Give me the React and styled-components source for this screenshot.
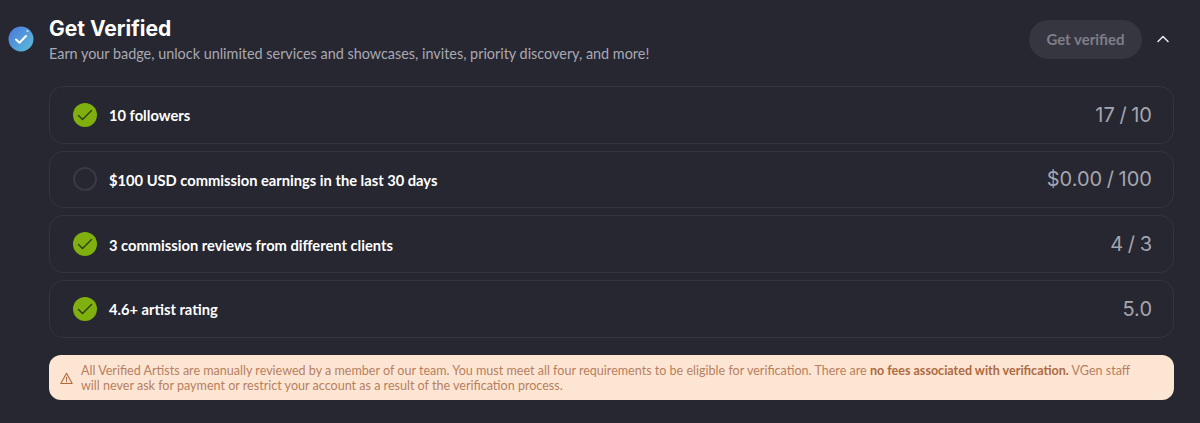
import React from 'react'
import styled, { createGlobalStyle } from 'styled-components'

const GlobalStyle = createGlobalStyle`
  html, body {
    margin: 0;
    background: #272731;
  }
  * {
    box-sizing: border-box;
  }
`

const Page = styled.div`
  width: 1200px;
  height: 423px;
  overflow: hidden;
  background: #272731;
  font-family: Lato, "Liberation Sans", sans-serif;
  padding: 13px 26px 0 8px;
  display: flex;
  flex-direction: column;
`

const Header = styled.header`
  display: flex;
  align-items: center;
  height: 52px;
`

const Badge = styled.svg`
  flex: 0 0 26px;
  width: 26px;
  height: 26px;
  margin-right: 15px;
`

const HeaderText = styled.div`
  flex: 1 1 auto;
`

const Title = styled.h2`
  margin: 0;
  font-family: Inter, "Liberation Sans", sans-serif;
  font-size: 21px;
  line-height: 27px;
  font-weight: 700;
  color: #fff;
`

const Subtitle = styled.p`
  margin: 2px 0 0;
  font-size: 14.4px;
  line-height: 20px;
  color: #a9a9b3;
`

const VerifyButton = styled.button`
  border: 0;
  width: 113px;
  height: 39px;
  border-radius: 20px;
  background: #363640;
  color: #7e7e88;
  font: 700 15px Lato, "Liberation Sans", sans-serif;
`

const Chevron = styled.svg`
  width: 14px;
  height: 14px;
  margin: 0 4px 0 14px;
`

const Requirements = styled.ul`
  list-style: none;
  margin: 21px 0 0 41px;
  padding: 0;
  display: flex;
  flex-direction: column;
  gap: 7px;
`

const Requirement = styled.li`
  height: 57.67px;
  border: 1px solid #34343e;
  border-radius: 14px;
  padding: 0 21px 0 23px;
  display: flex;
  align-items: center;
`

const StatusMark = styled.span`
  flex: 0 0 24px;
  width: 24px;
  height: 24px;
  border-radius: 50%;
  margin-right: 12px;
  display: flex;
  align-items: center;
  justify-content: center;
  background: ${p => (p.$done ? '#7fb00d' : 'transparent')};
  border: ${p => (p.$done ? '0' : '2px solid #3a3a44')};
`

const Label = styled.span`
  flex: 1 1 auto;
  padding-top: 1px;
  font-size: 14.7px;
  font-weight: 700;
  color: #fff;
`

const Progress = styled.span`
  font-family: Inter, "Liberation Sans", sans-serif;
  font-size: 20px;
  word-spacing: -1px;
  color: #a5a5ae;
`

const Notice = styled.div`
  margin: 17px 0 0 41px;
  height: 45px;
  border-radius: 12px;
  background: #fde5d3;
  padding: 2px 40px 0 11px;
  display: flex;
  align-items: center;
  gap: 8px;
  font-size: 12.55px;
  line-height: 15.5px;
  color: #b67f5f;
`

const NoticeIcon = styled.svg`
  flex: 0 0 13px;
  width: 13px;
  height: 13px;
`

const Strong = styled.strong`
  font-weight: 700;
  color: #ae6a42;
`

const requirements = [
  { label: '10 followers', progress: '17 / 10', done: true },
  { label: '$100 USD commission earnings in the last 30 days', progress: '$0.00 / 100', done: false },
  { label: '3 commission reviews from different clients', progress: '4 / 3', done: true },
  { label: '4.6+ artist rating', progress: '5.0', done: true },
]

export default function App () {
  return (
    <Page>
      <GlobalStyle />
      <Header>
        <Badge viewBox="0 0 26 26">
          <defs>
            <linearGradient id="badge" x1="0" y1="0" x2="1" y2="1">
              <stop offset="0" stopColor="#4a76dc" />
              <stop offset="1" stopColor="#5cc0d8" />
            </linearGradient>
          </defs>
          <circle cx="13" cy="13" r="12.5" fill="url(#badge)" />
          <circle cx="19.5" cy="5" r="1" fill="#cfeffa" />
          <path d="M8 13.5l3.5 3.2L18 10" fill="none" stroke="#fff" strokeWidth="2" strokeLinecap="round" strokeLinejoin="round" />
        </Badge>
        <HeaderText>
          <Title>Get Verified</Title>
          <Subtitle>Earn your badge, unlock unlimited services and showcases, invites, priority discovery, and more!</Subtitle>
        </HeaderText>
        <VerifyButton disabled>Get verified</VerifyButton>
        <Chevron viewBox="0 0 14 14">
          <path d="M2 9.5L7 4.5l5 5" fill="none" stroke="#e8e8ec" strokeWidth="1.5" strokeLinecap="round" strokeLinejoin="round" />
        </Chevron>
      </Header>
      <Requirements>
        {requirements.map(item => (
          <Requirement key={item.label}>
            <StatusMark $done={item.done}>
              {item.done && (
                <svg width="18" height="18" viewBox="0 0 18 18">
                  <path d="M2.5 9.5l4 4L15.5 4.5" fill="none" stroke="#2a3a12" strokeWidth="1.4" strokeLinecap="round" strokeLinejoin="round" />
                </svg>
              )}
            </StatusMark>
            <Label>{item.label}</Label>
            <Progress>{item.progress}</Progress>
          </Requirement>
        ))}
      </Requirements>
      <Notice>
        <NoticeIcon viewBox="0 0 12 12">
          <path d="M6 1.2L11.2 10.6H.8z" fill="none" stroke="#b0683e" strokeWidth="1" strokeLinejoin="round" />
          <path d="M6 4.8v2.8M6 8.8v.3" fill="none" stroke="#b0683e" strokeWidth="1" strokeLinecap="round" />
        </NoticeIcon>
        <div>
          All Verified Artists are manually reviewed by a member of our team. You must meet all four requirements to be eligible for verification. There are <Strong>no fees associated with verification.</Strong> VGen staff will never ask for payment or restrict your account as a result of the verification process.
        </div>
      </Notice>
    </Page>
  )
}
